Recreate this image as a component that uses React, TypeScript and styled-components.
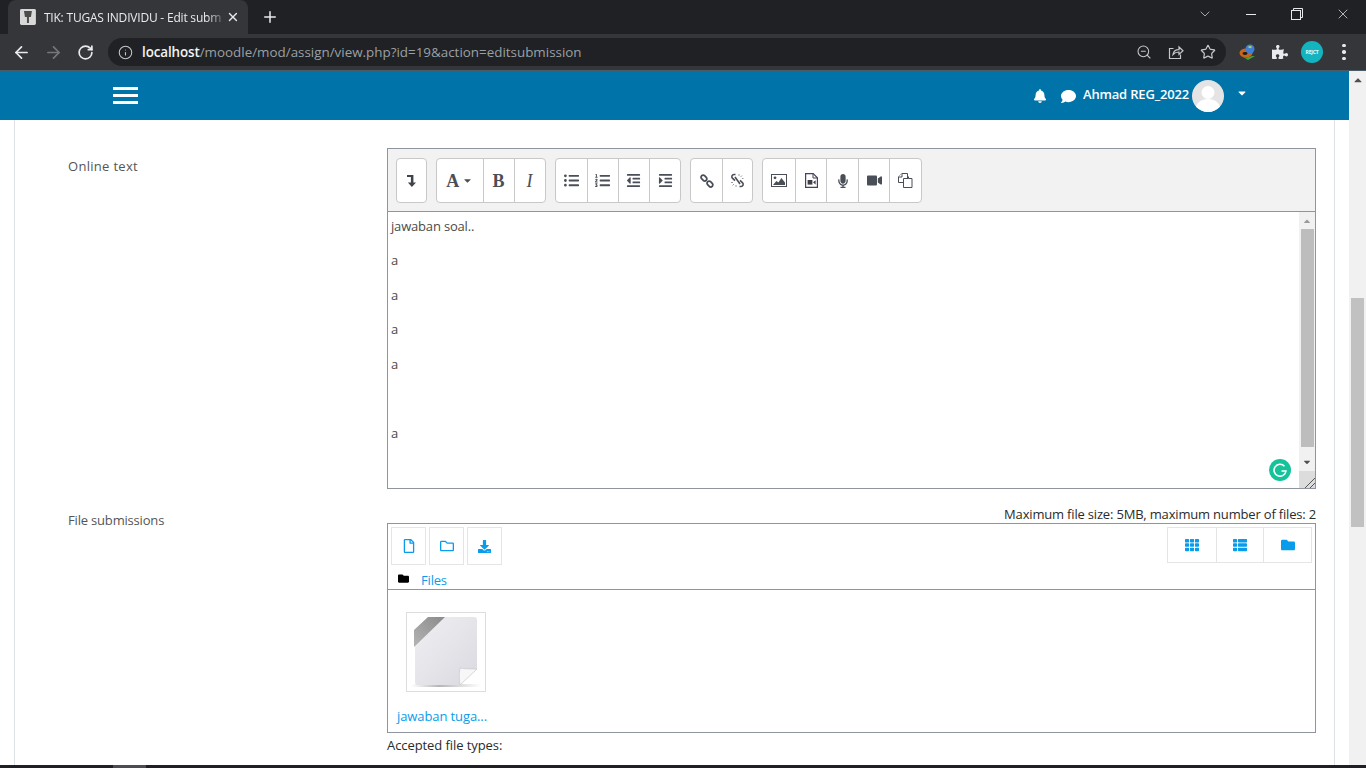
import React from "react";
import styled, { createGlobalStyle } from "styled-components";
import { ArrowLeft, ArrowRight, RotateCw, Info, ZoomOut, Star, Plus, X, ChevronDown } from "lucide-react";
import {
  FaBell, FaComment, FaCaretDown, FaCaretUp, FaListUl, FaListOl, FaOutdent, FaIndent,
  FaMicrophone, FaVideo, FaRegFile, FaRegFolder, FaDownload,
  FaTh, FaThList, FaFolder, FaPuzzlePiece,
} from "react-icons/fa";

const Global = createGlobalStyle`
html,body{margin:0;padding:0;height:768px;overflow:hidden;background:#fff;}
*{box-sizing:border-box;}
body{font-family:"Open Sans","Noto Sans",sans-serif;font-size:13px;letter-spacing:-0.18px;color:#373a3c;}
`;

const Screen = styled.div`
width:1366px;
height:768px;
display:flex;
flex-direction:column;
overflow:hidden;
`;
const TabStrip = styled.div`
height:34px;
background:#202124;
display:flex;
align-items:flex-end;
padding-left:8px;
flex:none;
`;
const Tab = styled.div`
width:240px;
height:34px;
background:#35363a;
border-radius:8px 8px 0 0;
display:flex;
align-items:center;
padding:0 8px 0 12px;
color:#e8eaed;
`;
const TabTitle = styled.span`
flex:1;
margin-left:8px;
font-size:12px;
letter-spacing:-0.2px;
white-space:nowrap;
-webkit-mask-image:linear-gradient(to right,#000 92%,rgba(0,0,0,0.3));
mask-image:linear-gradient(to right,#000 92%,rgba(0,0,0,0.3));
`;
const NewTab = styled.div`
margin-left:13px;
height:34px;
display:flex;
align-items:center;
color:#e8eaed;
`;
const WindowControls = styled.div`
margin-left:auto;
height:28px;
align-self:flex-start;
display:flex;
color:#e8eaed;
`;
const WindowButton = styled.div`
width:46px;
height:28px;
display:flex;
align-items:center;
justify-content:center;
`;
const MinimizeBar = styled.i`
display:block;
width:10px;
height:1px;
background:#e8eaed;
`;
const ToolBar = styled.div`
height:37px;
flex:none;
background:#35363a;
border-bottom:1px solid #4a5a66;
display:flex;
align-items:center;
padding-left:6px;
`;
const NavButton = styled.div<{ $dim?: boolean }>`
width:32px;
height:28px;
display:flex;
align-items:center;
justify-content:center;
padding-right:1px;
color:${(p) => (p.$dim ? "#75777b" : "#e8eaed")};
`;
const Omnibox = styled.div`
margin-left:6px;
width:1118px;
height:28px;
border-radius:14px;
background:#202124;
display:flex;
align-items:center;
padding:0 2px 0 10px;
color:#c4c7ca;
`;
const Url = styled.div`
margin-left:9px;
font-size:13.4px;
letter-spacing:0;
color:#9aa0a6;
white-space:nowrap;
b{color:#f1f3f4;font-weight:600;letter-spacing:-0.1px;}
`;
const OmniIcons = styled.div`
margin-left:auto;
display:flex;
`;
const OmniIcon = styled.div`
width:32px;
height:28px;
display:flex;
align-items:center;
justify-content:center;
color:#c4c7ca;
`;
const Extensions = styled.div`
margin-left:6px;
display:flex;
align-items:center;
`;
const ExtSlot = styled.div`
width:32px;
height:28px;
display:flex;
align-items:center;
justify-content:center;
color:#e8eaed;
`;
const Profile = styled.div`
width:22px;
height:22px;
border-radius:50%;
background:#13b4bf;
color:#e8fbfc;
font-size:5px;
font-weight:700;
display:flex;
align-items:center;
justify-content:center;
`;
const MenuDots = styled.div`
display:flex;
flex-direction:column;
gap:3px;
i{width:3.5px;height:3.5px;border-radius:50%;background:#e8eaed;display:block;}
`;

const Viewport = styled.div`
flex:1;
display:flex;
min-height:0;
`;
const PageColumn = styled.div`
flex:1;
min-width:0;
display:flex;
flex-direction:column;
`;
const Navbar = styled.div`
height:49px;
flex:none;
background:#0073a8;
display:flex;
align-items:center;
padding:0 101px 0 113px;
color:#fff;
`;
const Burger = styled.div`
width:25px;
display:flex;
flex-direction:column;
gap:4px;
i{height:3px;background:#fff;display:block;}
`;
const UserMenu = styled.div`
margin-left:auto;
display:flex;
align-items:center;
`;
const UserName = styled.span`
font-size:13px;
font-weight:600;
margin:-3px 3px 0 7px;
`;
const Avatar = styled.div`
width:32px;
height:32px;
border-radius:50%;
overflow:hidden;
background:#e4e4e4;
`;
const Caret = styled.div`
margin:-6px 0 0 12px;
display:flex;
`;
const Card = styled.div`
flex:1;
margin:0 14px;
border-left:1px solid #dee2e6;
border-right:1px solid #dee2e6;
padding:28px 0 0 53px;
overflow:hidden;
`;
const FormRow = styled.div<{ $gap?: number }>`
display:grid;
grid-template-columns:319px 929px;
margin-top:${(p) => p.$gap || 0}px;
`;
const Label = styled.div<{ $top: number; $spacing?: number }>`
padding-top:${(p) => p.$top}px;
line-height:18px;
color:#555;
letter-spacing:${(p) => p.$spacing ?? -0.18}px;
`;
const Editor = styled.div`
height:341px;
border:1px solid #8f959e;
display:flex;
flex-direction:column;
`;
const AttoBar = styled.div`
height:63px;
flex:none;
background:#f2f2f2;
border-bottom:1px solid #8f959e;
padding:9px 0 0 8px;
display:flex;
gap:9px;
align-items:flex-start;
`;
const AttoGroup = styled.div`
height:45px;
display:flex;
background:#fff;
border:1px solid #c8c8c8;
border-radius:4px;
`;
const AttoButton = styled.div<{ $w: number }>`
width:${(p) => p.$w}px;
height:100%;
display:flex;
align-items:center;
justify-content:center;
gap:3px;
color:#4a4f57;
& + &{border-left:1px solid #c8c8c8;}
`;
const SerifGlyph = styled.span<{ $italic?: boolean }>`
font-family:"Liberation Serif",serif;
font-size:18px;
font-weight:${(p) => (p.$italic ? 400 : 700)};
font-style:${(p) => (p.$italic ? "italic" : "normal")};
letter-spacing:0;
line-height:1;
color:#4a4f57;
`;
const EditArea = styled.div`
flex:1;
display:flex;
position:relative;
min-height:0;
`;
const EditText = styled.div`
flex:1;
padding:4.6px 3px;
color:#4a4a4a;
p{margin:0 0 15px;line-height:19.6px;height:19.6px;}
`;
const Grammarly = styled.div`
position:absolute;
right:24px;
bottom:7px;
width:22px;
height:22px;
border-radius:50%;
background:#15c39a;
display:flex;
align-items:center;
justify-content:center;
`;
const MiniScroll = styled.div`
width:16px;
flex:none;
background:#f1f1f1;
display:flex;
flex-direction:column;
align-items:center;
color:#505050;
`;
const MiniArrow = styled.div`
height:17px;
flex:none;
display:flex;
align-items:center;
justify-content:center;
`;
const MiniThumb = styled.div`
width:13px;
height:218px;
flex:none;
background:#bdbdbd;
`;
const ResizeCorner = styled.div`
width:100%;
margin-top:auto;
height:17px;
background:#dcdcdc;
display:flex;
align-items:flex-end;
justify-content:flex-end;
`;
const LimitNote = styled.div`
text-align:right;
line-height:20px;
margin-bottom:-1px;
color:#2b2b2b;
`;
const FileManager = styled.div`
height:210px;
border:1px solid #8f959e;
display:flex;
flex-direction:column;
`;
const FmHeader = styled.div`
height:66px;
flex:none;
border-bottom:1px solid #8f959e;
padding:3px 3px 0;
display:flex;
flex-direction:column;
`;
const FmActions = styled.div`
display:flex;
justify-content:space-between;
align-items:flex-start;
`;
const FmLeft = styled.div`
display:flex;
gap:3px;
`;
const FmButton = styled.div`
width:35px;
height:38px;
border:1px solid #e5e5e5;
display:flex;
align-items:center;
justify-content:center;
color:#099ceb;
`;
const FmViews = styled.div`
display:flex;
height:36px;
border:1px solid #e5e5e5;
`;
const FmView = styled.div`
width:47.6px;
display:flex;
align-items:center;
justify-content:center;
color:#099ceb;
& + &{border-left:1px solid #e5e5e5;}
`;
const FmPath = styled.div`
display:flex;
align-items:center;
padding:6px 0 0 7px;
color:#099ceb;
line-height:18px;
`;
const PathFolder = styled.span`
color:#000;
width:23px;
display:flex;
margin-top:-4px;
`;
const FmBody = styled.div`
padding:22px 0 0 9px;
`;
const Thumb = styled.div`
width:80px;
height:80px;
margin-left:9px;
border:1px solid #ddd;
display:flex;
`;
const FileName = styled.div`
margin-top:15px;
color:#099ceb;
letter-spacing:-0.1px;
line-height:18px;
`;
const Accepted = styled.div`
line-height:24px;
letter-spacing:-0.08px;
color:#2b2b2b;
`;
const PageScroll = styled.div`
width:17px;
flex:none;
background:#f1f1f1;
display:flex;
flex-direction:column;
align-items:center;
color:#505050;
`;
const PageScrollUp = styled.div`
height:17px;
flex:none;
display:flex;
align-items:center;
justify-content:center;
`;
const PageThumb = styled.div`
margin-top:210px;
width:13px;
height:229px;
background:#c1c1c1;
`;
const Taskbar = styled.div`
height:3px;
flex:none;
background:#1f2023;
padding-left:113px;
i{display:block;width:33px;height:3px;background:#4c4d50;}
`;

const Favicon = () => (
  <svg width="16" height="16" viewBox="0 0 16 16">
    <rect width="16" height="16" rx="1.5" fill="#d8d8d8" />
    <path d="M4 2h8l-1 6H9v6H7V8H5z" fill="#4c4c4c" />
  </svg>
);
const ShareIcon = () => (
  <svg width="16" height="16" viewBox="0 0 16 16" fill="none" stroke="#c4c7ca" strokeWidth="1.2">
    <path d="M5.5 4.5H1.5v10h11v-4" />
    <path d="M5 10.5c.5-3 3-4.8 6-4.8V3l4 3.8-4 3.7V8c-2.5 0-4.5.8-6 2.5z" />
  </svg>
);
const RestoreIcon = () => (
  <svg width="12" height="12" viewBox="0 0 12 12" fill="none" stroke="#e8eaed" strokeWidth="1">
    <rect x="0.5" y="2.5" width="9" height="9" />
    <path d="M2.5 2.5v-2h9v9h-2" />
  </svg>
);
const IdmIcon = () => (
  <svg width="18" height="16" viewBox="0 0 18 16">
    <ellipse cx="7" cy="9" rx="6.5" ry="4.5" fill="#c9661d" />
    <path d="M1 11c3 3 8 3 12 1l3 0-7 4z" fill="#3fa535" />
    <circle cx="11" cy="5" r="4.5" fill="#3f7fd6" />
    <path d="M9 3c1-1.5 3-1.5 4 0-1 1.5-3 1.5-4 0z" fill="#a9d76a" />
    <ellipse cx="6" cy="9.5" rx="2.5" ry="1.4" fill="#1c1c1c" />
  </svg>
);
const AvatarPicture = () => (
  <svg width="32" height="32" viewBox="0 0 32 32">
    <circle cx="16" cy="12.5" r="6.5" fill="#fff" />
    <path d="M3 32c0-9 6-13 13-13s13 4 13 13z" fill="#fff" />
  </svg>
);
const CollapseIcon = () => (
  <svg width="9" height="12" viewBox="0 0 9 12" fill="#3f434a">
    <path d="M0 0h6.4v7.6H9L4.9 12 .9 7.6h3V2H0z" />
  </svg>
);
const LinkIcon = () => (
  <svg width="14" height="14" viewBox="0 0 14 14" fill="none" stroke="#4a4f57" strokeWidth="1.8">
    <rect x="-3.2" y="-2" width="6.4" height="4.2" rx="2" transform="translate(4 4) rotate(45)" />
    <rect x="-3.2" y="-2" width="6.4" height="4.2" rx="2" transform="translate(10 10) rotate(45)" />
  </svg>
);
const UnlinkIcon = () => (
  <svg width="15" height="15" viewBox="0 0 15 15" fill="none">
    <path d="M5.5 1.5H4a2.2 2.2 0 0 0-1.6 3.7L5 7.6M9.5 13.5H11a2.2 2.2 0 0 0 1.6-3.7L10 7.4M5 4l5 7" stroke="#4a4f57" strokeWidth="1.6" />
    <path d="M9 1v2M12 2.5l-1.5 1.5M13.5 5.5H12M1 9.5h2M2.5 12.5L4 11M6 14v-2" stroke="#9a9ea4" strokeWidth="1" />
  </svg>
);
const ImageIcon = () => (
  <svg width="16" height="13" viewBox="0 0 16 13">
    <rect x="0.5" y="0.5" width="15" height="12" fill="#fff" stroke="#4a4f57" />
    <circle cx="4" cy="3.8" r="1.4" fill="#4a4f57" />
    <path d="M2 11l3.4-4 2 1.6L10.4 4 14 8.4V11z" fill="#4a4f57" />
  </svg>
);
const FileVideoIcon = () => (
  <svg width="13" height="15" viewBox="0 0 13 15">
    <path d="M.6.6h7.6l4.2 4.2v9.6H.6z" fill="#fff" stroke="#4a3f5c" strokeWidth="1.2" />
    <path d="M8 .8v4.2h4.2" fill="none" stroke="#4a3f5c" strokeWidth="1" />
    <rect x="2.6" y="7" width="4.8" height="4.6" fill="#3d4047" />
    <path d="M8 9.3l2.6-2v4.2z" fill="#3d4047" />
  </svg>
);
const PasteIcon = () => (
  <svg width="15" height="15" viewBox="0 0 15 15" fill="#fff" stroke="#4a4f57" strokeWidth="1">
    <path d="M.5 4L4 .5h5.5v9H.5z" />
    <path d="M4 .5V4H.5" />
    <path d="M5.5 5.5h5l3.5 0v9h-8.5z" />
    <path d="M10.5 3.5v2" />
  </svg>
);
const BlankFile = () => (
  <svg width="78" height="78" viewBox="0 0 78 78">
    <defs>
      <linearGradient id="paper" x1="0" y1="0" x2="1" y2="1">
        <stop offset="0" stopColor="#f0f0f3" />
        <stop offset="1" stopColor="#d9d9e0" />
      </linearGradient>
      <linearGradient id="ribbon" x1="0" y1="1" x2="1" y2="0">
        <stop offset="0" stopColor="#b4b4b4" />
        <stop offset="1" stopColor="#8a8a8a" />
      </linearGradient>
      <linearGradient id="shade" x1="0" y1="0" x2="1" y2="0">
        <stop offset="0" stopColor="#bbb" stopOpacity="0" />
        <stop offset="0.4" stopColor="#b5b5b5" />
        <stop offset="1" stopColor="#bbb" stopOpacity="0" />
      </linearGradient>
    </defs>
    <rect x="4" y="71" width="70" height="3" fill="url(#shade)" />
    <path d="M21 4h46a3 3 0 0 1 3 3v49L53 72H11a3 3 0 0 1-3-3V17z" fill="url(#paper)" />
    <path d="M21 4h17L7 34V17z" fill="url(#ribbon)" />
    <path d="M53 72c-1-6-1-11 0-17 5 1 11 1 17 1z" fill="#f7f7f8" stroke="#c4c4c8" strokeWidth="0.6" />
  </svg>
);

const paragraphs = ["jawaban soal..", "a", "a", "a", "a", "", "a"];

export default function App() {
  return (
    <Screen>
      <Global />
      <TabStrip>
        <Tab>
          <Favicon />
          <TabTitle>TIK: TUGAS INDIVIDU - Edit subm</TabTitle>
          <X size={14} strokeWidth={2.4} style={{ marginLeft: 5 }} />
        </Tab>
        <NewTab><Plus size={18} strokeWidth={2} /></NewTab>
        <WindowControls>
          <WindowButton><ChevronDown size={16} strokeWidth={1} /></WindowButton>
          <WindowButton><MinimizeBar /></WindowButton>
          <WindowButton><RestoreIcon /></WindowButton>
          <WindowButton><X size={16} strokeWidth={1.1} /></WindowButton>
        </WindowControls>
      </TabStrip>
      <ToolBar>
        <NavButton><ArrowLeft size={19} strokeWidth={2.2} /></NavButton>
        <NavButton $dim><ArrowRight size={19} strokeWidth={2.2} /></NavButton>
        <NavButton><RotateCw size={17} strokeWidth={2.4} /></NavButton>
        <Omnibox>
          <Info size={15} strokeWidth={1.7} />
          <Url><b>localhost</b>/moodle/mod/assign/view.php?id=19&amp;action=editsubmission</Url>
          <OmniIcons>
            <OmniIcon><ZoomOut size={16} strokeWidth={1.6} /></OmniIcon>
            <OmniIcon><ShareIcon /></OmniIcon>
            <OmniIcon><Star size={16} strokeWidth={1.8} /></OmniIcon>
          </OmniIcons>
        </Omnibox>
        <Extensions>
          <ExtSlot><IdmIcon /></ExtSlot>
          <ExtSlot><FaPuzzlePiece size={16} /></ExtSlot>
          <ExtSlot><Profile>REJCT</Profile></ExtSlot>
          <ExtSlot><MenuDots><i /><i /><i /></MenuDots></ExtSlot>
        </Extensions>
      </ToolBar>
      <Viewport>
        <PageColumn>
          <Navbar>
            <Burger><i /><i /><i /></Burger>
            <UserMenu>
              <FaBell size={14} />
              <FaComment size={15} style={{ marginLeft: 14, marginTop: 2 }} />
              <UserName>Ahmad REG_2022</UserName>
              <Avatar><AvatarPicture /></Avatar>
              <Caret><FaCaretDown size={12} /></Caret>
            </UserMenu>
          </Navbar>
          <Card>
            <FormRow>
              <Label $top={9} $spacing={0.3}>Online text</Label>
              <Editor>
                <AttoBar>
                  <AttoGroup>
                    <AttoButton $w={29}><CollapseIcon /></AttoButton>
                  </AttoGroup>
                  <AttoGroup>
                    <AttoButton $w={45.5}><SerifGlyph>A</SerifGlyph><FaCaretDown size={11} /></AttoButton>
                    <AttoButton $w={31}><SerifGlyph>B</SerifGlyph></AttoButton>
                    <AttoButton $w={31}><SerifGlyph $italic>I</SerifGlyph></AttoButton>
                  </AttoGroup>
                  <AttoGroup>
                    <AttoButton $w={31.2}><FaListUl size={15} /></AttoButton>
                    <AttoButton $w={31.2}><FaListOl size={15} /></AttoButton>
                    <AttoButton $w={31.2}><FaOutdent size={15} /></AttoButton>
                    <AttoButton $w={31.2}><FaIndent size={15} /></AttoButton>
                  </AttoGroup>
                  <AttoGroup>
                    <AttoButton $w={30.5}><LinkIcon /></AttoButton>
                    <AttoButton $w={30.5}><UnlinkIcon /></AttoButton>
                  </AttoGroup>
                  <AttoGroup>
                    <AttoButton $w={31.5}><ImageIcon /></AttoButton>
                    <AttoButton $w={31.5}><FileVideoIcon /></AttoButton>
                    <AttoButton $w={31.5}><FaMicrophone size={14} /></AttoButton>
                    <AttoButton $w={31.5}><FaVideo size={15} /></AttoButton>
                    <AttoButton $w={31.5}><PasteIcon /></AttoButton>
                  </AttoGroup>
                </AttoBar>
                <EditArea>
                  <EditText>
                    {paragraphs.map((t, i) => (
                      <p key={i}>{t}</p>
                    ))}
                  </EditText>
                  <Grammarly>
                    <svg width="14" height="14" viewBox="0 0 14 14" fill="none" stroke="#fff" strokeWidth="1.6">
                      <path d="M11.5 3.2A6 6 0 1 0 13 8H8.5" />
                    </svg>
                  </Grammarly>
                  <MiniScroll>
                    <MiniArrow><FaCaretUp size={10} color="#9a9a9a" /></MiniArrow>
                    <MiniThumb />
                    <MiniArrow style={{ marginTop: 6 }}><FaCaretDown size={10} /></MiniArrow>
                    <ResizeCorner>
                      <svg width="12" height="12" viewBox="0 0 12 12" stroke="#555" strokeWidth="1">
                        <path d="M2 12L12 2M7 12l5-5" />
                      </svg>
                    </ResizeCorner>
                  </MiniScroll>
                </EditArea>
              </Editor>
            </FormRow>
            <FormRow $gap={15}>
              <Label $top={7}>File submissions</Label>
              <div>
                <LimitNote>Maximum file size: 5MB, maximum number of files: 2</LimitNote>
                <FileManager>
                  <FmHeader>
                    <FmActions>
                      <FmLeft>
                        <FmButton><FaRegFile size={14} /></FmButton>
                        <FmButton><FaRegFolder size={14} /></FmButton>
                        <FmButton><FaDownload size={13} /></FmButton>
                      </FmLeft>
                      <FmViews>
                        <FmView><FaTh size={14} /></FmView>
                        <FmView><FaThList size={14} /></FmView>
                        <FmView><FaFolder size={14} /></FmView>
                      </FmViews>
                    </FmActions>
                    <FmPath>
                      <PathFolder><FaFolder size={11} /></PathFolder>
                      Files
                    </FmPath>
                  </FmHeader>
                  <FmBody>
                    <Thumb><BlankFile /></Thumb>
                    <FileName>jawaban tuga...</FileName>
                  </FmBody>
                </FileManager>
                <Accepted>Accepted file types:</Accepted>
              </div>
            </FormRow>
          </Card>
        </PageColumn>
        <PageScroll>
          <PageScrollUp><FaCaretUp size={12} /></PageScrollUp>
          <PageThumb />
        </PageScroll>
      </Viewport>
      <Taskbar><i /></Taskbar>
    </Screen>
  );
}
